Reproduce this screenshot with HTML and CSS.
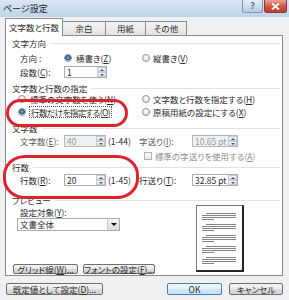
FILE: index.html
```html
<!DOCTYPE html>
<html lang="ja">
<head>
    <meta charset="UTF-8">
    <title>ページ設定</title>
    <link rel="stylesheet" href="styles.css">
</head>
<body>
<div class="window">
    <div class="titlebar">
        <span class="title">ページ設定</span>
        <div class="caption-btns">
            <span class="cap help">?</span>
            <span class="cap close">
                <svg width="9" height="7" viewBox="0 0 9 7"><path d="M1 0.5 L8 6.5 M8 0.5 L1 6.5" stroke="#fff" stroke-width="1.8"/></svg>
            </span>
        </div>
    </div>

    <div class="client">
        <div class="tabs">
            <div class="tab active">文字数と行数</div>
            <div class="tab">余白</div>
            <div class="tab">用紙</div>
            <div class="tab">その他</div>
        </div>

        <div class="panel">
            <div class="group-title">文字方向</div>
            <div class="row row-first">
                <div class="col-left">
                    <span class="label">方向 :</span>
                    <span class="radio on"></span>横書き(<u>Z</u>)
                </div>
                <div class="col-right">
                    <span class="radio radio-r"></span>縦書き(<u>V</u>)
                </div>
            </div>
            <div class="row">
                <div class="col-left">
                    <span class="label">段数(<u>C</u>):</span>
                    <span class="spin spin-wide"><span class="spin-value">1</span><span class="spin-btns"><i class="up"></i><i class="down"></i></span></span>
                </div>
            </div>

            <div class="group-title gt-2">文字数と行数の指定</div>
            <div class="row row-opt">
                <div class="col-left">
                    <span class="radio radio-l"></span>標準の文字数を使う(<u>N</u>)
                </div>
                <div class="col-right">
                    <span class="radio radio-r"></span>文字数と行数を指定する(<u>H</u>)
                </div>
            </div>
            <div class="row row-opt row-opt2">
                <div class="col-left">
                    <span class="radio radio-l on"></span><span class="focus">行数だけを指定する(<u>O</u>)</span>
                </div>
                <div class="col-right">
                    <span class="radio radio-r"></span>原稿用紙の設定にする(<u>X</u>)
                </div>
            </div>

            <div class="group-title gt-3">文字数</div>
            <div class="row row-tight">
                <div class="col-left">
                    <span class="label muted">文字数(<u>E</u>):</span>
                    <span class="spin disabled"><span class="spin-value">40</span><span class="spin-btns"><i class="up"></i><i class="down"></i></span></span>
                    <span class="range">(1-44)</span>
                </div>
                <div class="col-right">
                    <span class="label-r muted">字送り(<u>I</u>):</span>
                    <span class="spin spin-pt disabled"><span class="spin-value">10.65 pt</span><span class="spin-btns"><i class="up"></i><i class="down"></i></span></span>
                </div>
            </div>
            <div class="row row-check">
                <div class="col-left"></div>
                <div class="col-right">
                    <span class="checkbox"></span><span class="disabled-text">標準の字送りを使用する(<u>A</u>)</span>
                </div>
            </div>

            <div class="group-title gt-4">行数</div>
            <div class="row row-tight">
                <div class="col-left">
                    <span class="label">行数(<u>R</u>):</span>
                    <span class="spin"><span class="spin-value">20</span><span class="spin-btns"><i class="up"></i><i class="down"></i></span></span>
                    <span class="range">(1-45)</span>
                </div>
                <div class="col-right">
                    <span class="label-r">行送り(<u>T</u>):</span>
                    <span class="spin spin-pt"><span class="spin-value">32.85 pt</span><span class="spin-btns"><i class="up"></i><i class="down"></i></span></span>
                </div>
            </div>

            <div class="group-title gt-5">プレビュー</div>
            <div class="preview">
                <div class="preview-left">
                    <div class="target-label">設定対象(<u>Y</u>):</div>
                    <div class="select">
                        <span class="select-value">文書全体</span>
                        <span class="select-arrow"></span>
                    </div>
                    <div class="panel-buttons">
                        <span class="btn btn-grid">グリッド線(<u>W</u>)...</span>
                        <span class="btn btn-font">フォントの設定(<u>F</u>)...</span>
                    </div>
                </div>
                <div class="page">
                    <div class="para"><i class="first"></i><i></i><i></i><i class="last"></i></div>
                    <div class="para"><i class="first"></i><i></i><i></i><i class="last"></i></div>
                    <div class="para"><i class="first"></i><i></i><i></i><i class="last"></i></div>
                    <div class="para"><i class="first"></i><i></i><i></i><i class="last"></i></div>
                    <div class="para"><i class="first"></i><i></i><i></i><i class="last"></i></div>
                </div>
            </div>
        </div>

        <div class="footer">
            <span class="btn btn-default">既定値として設定(<u>D</u>)...</span>
            <span class="btn btn-ok">OK</span>
            <span class="btn btn-cancel">キャンセル</span>
        </div>
    </div>

    <!-- red annotation marks drawn over the dialog -->
    <div class="mark mark-1"></div>
    <div class="mark mark-2"></div>
</div>
</body>
</html>
```

FILE: styles.css
```css
* {
    box-sizing: border-box;
}
body {
    margin: 0;
    font-family: "Noto Sans CJK JP", sans-serif;
    font-size: 8.5px;
    font-feature-settings: "palt";
    color: #2c2c2c;
}
u {
    text-decoration-thickness: 1px;
    text-underline-offset: 1px;
}
.window {
    position: relative;
    width: 289px;
    height: 300px;
    overflow: hidden;
    background: #f0f0f0;
}

/* title bar */
.titlebar {
    display: flex;
    justify-content: space-between;
    height: 17px;
    background: linear-gradient(#d9e6f4, #bfd3ea);
}
.title {
    padding-left: 3px;
    line-height: 17px;
    font-size: 9px;
    color: #1e1e1e;
}
.caption-btns {
    display: flex;
    gap: 1px;
    margin-right: 2px;
}
.cap {
    display: flex;
    align-items: center;
    justify-content: center;
    height: 13px;
    border: 1px solid #8196b0;
    border-top: none;
    border-radius: 0 0 3px 3px;
}
.help {
    width: 21px;
    background: linear-gradient(#e6eef7, #b8cce3);
    color: #5673a0;
    font-family: "DejaVu Sans", sans-serif;
    font-weight: bold;
    font-size: 8px;
}
.close {
    width: 23px;
    border-color: #8d3b33;
    background: linear-gradient(#e9a595, #d0594b 50%, #c23a2e);
}

/* client area */
.client {
    padding: 1px 6px 0 5px;
}
.tabs {
    display: flex;
    align-items: flex-end;
    height: 17px;
}
.tab {
    height: 14px;
    margin-left: -1px;
    border: 1px solid #898c95;
    border-bottom: none;
    background: linear-gradient(#f4f4f4, #e3e3e3);
    text-align: center;
    line-height: 13px;
}
.tab:nth-child(2) { width: 44px; }
.tab:nth-child(3) { width: 41px; }
.tab:nth-child(4) { width: 42px; }
.tab.active {
    position: relative;
    z-index: 1;
    width: 58px;
    height: 18px;
    margin-left: 0;
    margin-bottom: -1px;
    background: #fff;
    line-height: 17px;
}
.panel {
    display: flex;
    flex-direction: column;
    height: 241px;
    padding: 2px 2px 0 6px;
    border: 1px solid #898c95;
    background: #fff;
}

/* group headings with a rule */
.group-title {
    display: flex;
    align-items: center;
    gap: 4px;
    height: 10px;
    line-height: 10px;
}
.group-title::after {
    content: "";
    flex: 1;
    border-top: 1px solid #dfe3e8;
}
.gt-2 { margin-top: 4px; }
.gt-3 { margin-top: 5px; }
.gt-4 { margin-top: 1px; }
.gt-5 { margin-top: 8px; }

.row {
    display: flex;
    align-items: center;
    height: 14px;
}
.row-first { margin-top: 3px; }
.row-opt { height: 12px; }
.row-opt2 { margin-top: 1px; }
.row-tight { margin-top: 1px; }
.row-check {
    height: 11px;
    margin-top: 2px;
}
.col-left {
    display: flex;
    align-items: center;
    width: 127px;
    flex: none;
}
.col-right {
    display: flex;
    align-items: center;
}
.label {
    width: 44px;
    margin-left: 8px;
    flex: none;
}
.label-r {
    width: 53px;
    flex: none;
}
.muted { color: #5a5a5a; }
.range { margin-left: 2px; }

/* radio buttons and check box */
.radio {
    flex: none;
    width: 8px;
    height: 8px;
    margin-right: 4px;
    border: 1px solid #8f9092;
    border-radius: 50%;
    background: radial-gradient(circle at 50% 35%, #ffffff, #d8d8d8);
}
.radio.on {
    background: radial-gradient(circle at 50% 45%, #9fdcf7 0, #3d86b8 1.2px, #1c4e7a 2.6px, #eeeeee 3px);
}
.radio-l { margin-left: 6px; }
.radio-r { margin-left: 3px; margin-right: 3px; }
.focus {
    padding: 0 1px;
    outline: 1px dotted #555;
    line-height: 10px;
    letter-spacing: -0.6px;
}
.checkbox {
    width: 8px;
    height: 8px;
    margin: 0 3px 0 5px;
    border: 1px solid #b4b4b4;
    background: linear-gradient(#fafafa, #e6e6e6);
}
.disabled-text { color: #8c8c8c; }

/* spin boxes */
.spin {
    display: flex;
    width: 42px;
    height: 12px;
    border: 1px solid #abadb3;
    background: #fff;
}
.spin-wide { width: 43px; }
.spin-pt { width: 46px; }
.spin-value {
    flex: 1;
    padding-left: 2px;
    line-height: 10px;
    white-space: nowrap;
}
.spin.disabled {
    border-color: #b5b9bd;
    background: #eef1f4;
    color: #9a9a9a;
}
.spin-btns {
    display: flex;
    flex-direction: column;
    width: 9px;
}
.spin-btns i {
    position: relative;
    flex: 1;
    border: 1px solid #c3ccd6;
    background: linear-gradient(#f5f8fb, #dbe3ec);
}
.spin-btns i::after {
    content: "";
    position: absolute;
    left: 1.5px;
    top: 1px;
    border-left: 2px solid transparent;
    border-right: 2px solid transparent;
}
.spin-btns .up::after { border-bottom: 2px solid #4a5866; }
.spin-btns .down::after { border-top: 2px solid #4a5866; }

/* preview section */
.preview {
    flex: 1;
    display: flex;
}
.preview-left {
    flex: 1;
    display: flex;
    flex-direction: column;
}
.target-label {
    height: 12px;
    margin: 1px 0 0 8px;
    line-height: 12px;
}
.select {
    display: flex;
    width: 103px;
    height: 13px;
    margin-left: 5px;
    border: 1px solid #abadb3;
    background: #fff;
}
.select-value {
    flex: 1;
    padding-left: 2px;
    line-height: 11px;
}
.select-arrow {
    position: relative;
    width: 12px;
    border-left: 1px solid #c8cdd3;
    background: linear-gradient(#f4f4f4, #dcdcdc);
}
.select-arrow::after {
    content: "";
    position: absolute;
    left: 3px;
    top: 4px;
    border-left: 3px solid transparent;
    border-right: 3px solid transparent;
    border-top: 3px solid #111;
}
.panel-buttons {
    display: flex;
    gap: 5px;
    margin: auto 0 1px 1px;
}
.page {
    display: flex;
    flex-direction: column;
    gap: 4px;
    width: 48px;
    height: 67px;
    margin-right: 36px;
    padding: 7px 0 0 5px;
    border: 1px solid #777;
    border-right: 2px solid #222;
    border-bottom: 2px solid #222;
    background: #fff;
}
.para {
    display: flex;
    flex-direction: column;
    gap: 1px;
}
.para i {
    width: 34px;
    height: 1px;
    background: #858585;
}
.para .first {
    width: 30px;
    margin-left: 4px;
}
.para .last { width: 12px; }

/* buttons */
.btn {
    display: block;
    border: 1px solid #707070;
    border-radius: 2px;
    background: linear-gradient(#f3f3f3, #ebebeb 50%, #dddddd 50%, #d1d1d1);
    text-align: center;
    white-space: nowrap;
}
.btn-grid, .btn-font {
    height: 10px;
    line-height: 8px;
}
.btn-grid { width: 65px; }
.btn-font { width: 72px; }
.footer {
    display: flex;
    padding-top: 7px;
}
.footer .btn {
    height: 12px;
    line-height: 10px;
}
.btn-default {
    width: 97px;
    margin-left: 1px;
}
.btn-ok {
    width: 55px;
    margin-left: auto;
    border-color: #3c7fb1;
    background: linear-gradient(#f1f8fd, #e3f1fb 50%, #d2e9f8 50%, #c6e2f5);
}
.btn-cancel {
    width: 54px;
    margin-left: 7px;
}

/* red hand-drawn marks */
.mark {
    position: absolute;
    border: 3px solid #dc2430;
}
.mark-1 {
    left: 6px;
    top: 99px;
    width: 122px;
    height: 28px;
    border-radius: 14px;
}
.mark-2 {
    left: 3px;
    top: 155px;
    width: 136px;
    height: 44px;
    border-radius: 22px / 20px;
}
```
